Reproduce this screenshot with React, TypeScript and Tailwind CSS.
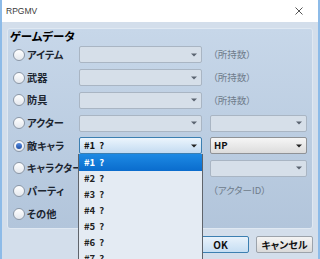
import React from "react";

const jp = "[font-family:'Noto_Sans_CJK_JP','Noto_Sans',sans-serif] [font-feature-settings:'palt']";

type Row = {
  label: string;
  checked?: boolean;
  combo: "disabled" | "focus";
  right?: "owned" | "combo" | "hp" | "actor" | null;
};

const rows: Row[] = [
  { label: "アイテム", combo: "disabled", right: "owned" },
  { label: "武器", combo: "disabled", right: "owned" },
  { label: "防具", combo: "disabled", right: "owned" },
  { label: "アクター", combo: "disabled", right: "combo" },
  { label: "敵キャラ", checked: true, combo: "focus", right: "hp" },
  { label: "キャラクター", combo: "disabled", right: "combo" },
  { label: "パーティ", combo: "disabled", right: "actor" },
  { label: "その他", combo: "disabled", right: null },
];

const items = ["#1 ?", "#2 ?", "#3 ?", "#4 ?", "#5 ?", "#6 ?", "#7 ?"];

function Arrow({ dark }: { dark?: boolean }) {
  return (
    <svg width="6" height="4" viewBox="0 0 6 4" className="shrink-0">
      <path d="M0 0.5 L6 0.5 L3 3.5 Z" fill={dark ? "#222" : "#5a6470"} />
    </svg>
  );
}

function Radio({ checked }: { checked?: boolean }) {
  return (
    <span className="w-[12px] h-[12px] rounded-full border border-[#8b97a6] bg-gradient-to-b from-white to-[#e4e8ee] flex items-center justify-center shrink-0">
      {checked && <span className="w-[6px] h-[6px] rounded-full bg-gradient-to-b from-[#5b8ee0] to-[#1e4fa6]" />}
    </span>
  );
}

function DisabledCombo() {
  return (
    <div className="h-[17px] w-full rounded-[2px] border border-[#a9b5c3] bg-[#d6dfe9] flex items-center justify-end pr-[4px]">
      <Arrow />
    </div>
  );
}

export default function App() {
  return (
    <div className={`w-[320px] h-[259px] overflow-hidden bg-[#d3deeb] border-x-2 border-[#8dbbe8] flex flex-col ${jp}`}>
      {/* title bar */}
      <div className="h-[22px] bg-white flex items-center justify-between pl-[4px] pr-[15px] shrink-0">
        <span className="text-[8.5px] text-[#3a3a3a] [font-family:'Liberation_Sans',sans-serif]">RPGMV</span>
        <svg width="8" height="8" viewBox="0 0 8 8">
          <path d="M0.5 0.5 L7.5 7.5 M7.5 0.5 L0.5 7.5" stroke="#555" strokeWidth="1" />
        </svg>
      </div>

      <div className="flex-1 px-[5px] pt-[6px]">
        {/* group box */}
        <div className="h-[201px] rounded-[3px] border border-[#dfe8f2] bg-gradient-to-b from-[#c7d7e9] to-[#b2c5db] px-[5px] pb-[3px]">
          <div className="h-[14.6px] flex items-center -ml-[3px] text-[11.5px] font-bold text-black leading-none">
            ゲームデータ
          </div>
          {rows.map((r) => (
            <div key={r.label} className="h-[22.7px] grid grid-cols-[66px_123px_8px_97px] items-center">
              <div className="flex items-center gap-[2px]">
                <Radio checked={r.checked} />
                <span className="text-[10.2px] font-bold text-[#1c2530] leading-none whitespace-nowrap">{r.label}</span>
              </div>
              {r.combo === "focus" ? (
                <div className="relative">
                  <div className="h-[17px] rounded-[2px] border border-[#3c7fb1] bg-gradient-to-b from-[#ecf5fd] to-[#c3dbf1] flex items-center justify-between pl-[4px] pr-[4px]">
                    <span className="text-[9.5px] font-bold text-[#111] leading-none [word-spacing:2px]">#1 ?</span>
                    <Arrow dark />
                  </div>
                  {/* open dropdown list */}
                  <div className="absolute top-full left-[-1px] w-[125px] h-[112px] bg-[#e4ebf3] border-x border-[#5f646b] z-10 flex flex-col overflow-hidden">
                    {items.map((it, i) => (
                      <div
                        key={it}
                        className={
                          i === 0
                            ? "h-[17px] shrink-0 flex items-center pl-[5px] bg-gradient-to-b from-[#1d8ae4] to-[#0a6ccd] text-white text-[9.5px] font-bold leading-none [word-spacing:2px]"
                            : "h-[16px] shrink-0 flex items-center pl-[5px] text-[#222] text-[9.5px] font-bold leading-none [word-spacing:2px]"
                        }
                      >
                        {it}
                      </div>
                    ))}
                  </div>
                </div>
              ) : (
                <DisabledCombo />
              )}
              <div />
              <div className="flex items-center">
                {r.right === "owned" && (
                  <span className="pl-[3px] text-[9.5px] text-[#6e7b8a] leading-none">（所持数）</span>
                )}
                {r.right === "actor" && (
                  <span className="pl-[3px] text-[9.5px] text-[#6e7b8a] leading-none">（アクターID）</span>
                )}
                {r.right === "combo" && <DisabledCombo />}
                {r.right === "hp" && (
                  <div className="w-full h-[17px] rounded-[2px] border border-[#8f9296] bg-gradient-to-b from-[#f6f6f6] to-[#dcdcdc] flex items-center justify-between pl-[3px] pr-[4px]">
                    <span className="text-[9.5px] font-bold text-[#111] leading-none">HP</span>
                    <Arrow dark />
                  </div>
                )}
              </div>
            </div>
          ))}
        </div>

        {/* buttons */}
        <div className="flex justify-end gap-[7px] mt-[7px]">
          <button className="w-[57px] h-[17px] rounded-[2px] border border-[#3c7fb1] bg-gradient-to-b from-[#e8f2fb] to-[#c6def3] text-[10px] font-bold text-[#111] leading-none">
            OK
          </button>
          <button className="w-[57px] h-[17px] rounded-[2px] border border-[#9ca3ab] bg-gradient-to-b from-[#f4f4f4] to-[#dadada] text-[10px] font-bold text-[#111] leading-none">
            キャンセル
          </button>
        </div>
      </div>
    </div>
  );
}
